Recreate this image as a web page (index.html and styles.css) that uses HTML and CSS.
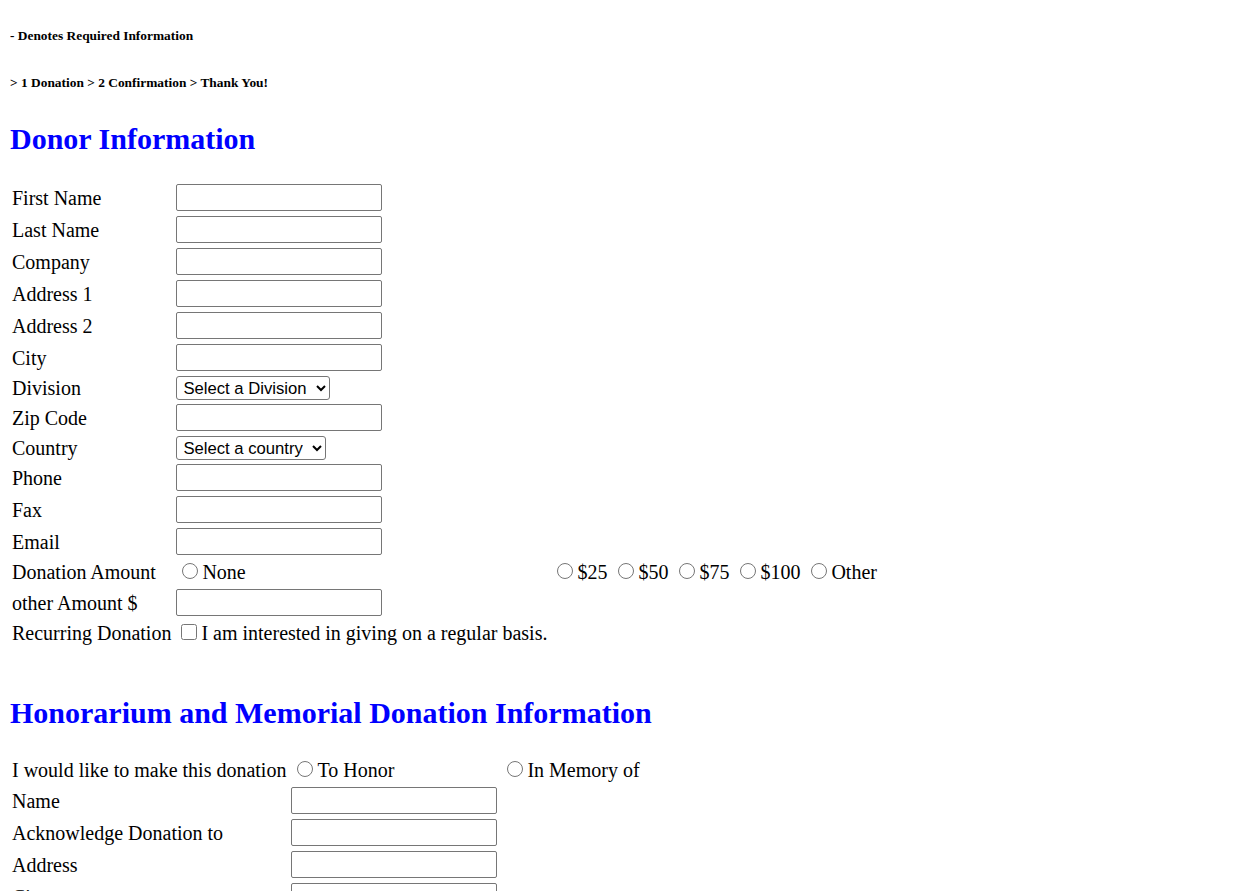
FILE: index.html
```html
<!DOCTYPE html>
<html>
<head>
<meta charset="utf-8">
<title>Donation</title>
<link rel="stylesheet" href="styles.css">
</head>
<body>
<h6 class="note note-first">- Denotes Required Information</h6>
<h6 class="note">&gt; 1 Donation &gt; 2 Confirmation &gt; Thank You!</h6>
<form class="donation">
  <h2 class="section">Donor Information</h2>
  <table class="fields">
    <tr><td class="label">First Name</td><td><input type="text" class="field"></td></tr>
    <tr><td class="label">Last Name</td><td><input type="text" class="field"></td></tr>
    <tr><td class="label">Company</td><td><input type="text" class="field"></td></tr>
    <tr><td class="label">Address 1</td><td><input type="text" class="field"></td></tr>
    <tr><td class="label">Address 2</td><td><input type="text" class="field"></td></tr>
    <tr><td class="label">City</td><td><input type="text" class="field"></td></tr>
    <tr><td class="label">Division</td><td><select class="picker"><option>Select a Division</option></select></td></tr>
    <tr><td class="label">Zip Code</td><td><input type="text" class="field"></td></tr>
    <tr><td class="label">Country</td><td><select class="picker"><option>Select a country</option></select></td></tr>
    <tr><td class="label">Phone</td><td><input type="text" class="field"></td></tr>
    <tr><td class="label">Fax</td><td><input type="text" class="field"></td></tr>
    <tr><td class="label">Email</td><td><input type="text" class="field"></td></tr>
    <tr class="choice">
      <td class="label">Donation Amount</td>
      <td><input type="radio" name="amount" class="pick">None</td>
      <td><input type="radio" name="amount" class="pick">$25 <input type="radio" name="amount" class="pick">$50 <input type="radio" name="amount" class="pick">$75 <input type="radio" name="amount" class="pick">$100 <input type="radio" name="amount" class="pick">Other</td>
    </tr>
    <tr><td class="label">other Amount $</td><td><input type="text" class="field"></td></tr>
    <tr class="choice"><td class="label">Recurring Donation</td><td><input type="checkbox" class="tick">I am interested in giving on a regular basis.</td></tr>
  </table>

  <h2 class="section section-spaced">Honorarium and Memorial Donation Information</h2>
  <table class="fields">
    <tr class="choice">
      <td class="label">I would like to make this donation</td>
      <td><input type="radio" name="kind" class="pick">To Honor</td>
      <td><input type="radio" name="kind" class="pick">In Memory of</td>
    </tr>
    <tr><td class="label">Name</td><td><input type="text" class="field"></td></tr>
    <tr><td class="label">Acknowledge Donation to</td><td><input type="text" class="field"></td></tr>
    <tr><td class="label">Address</td><td><input type="text" class="field"></td></tr>
    <tr><td class="label">City</td><td><input type="text" class="field"></td></tr>
    <tr><td class="label">Division</td><td><select class="picker"><option>Select a Division</option></select></td></tr>
    <tr><td class="label">Zip Code</td><td><input type="text" class="field"></td></tr>
  </table>
</form>
</body>
</html>
```

FILE: styles.css
```css
html, body {
  background: #ffffff;
}

body {
  margin: 0 10px 10px;
  font-family: "Liberation Serif", "Times New Roman", serif;
  font-size: 20px;
  color: #000000;
}

.note {
  font-size: 13.4px;
  font-weight: bold;
  margin: 31px 0;
}

.note-first {
  margin-top: 28px;
}

.donation {
  margin: 0;
}

.section {
  font-size: 30px;
  font-weight: bold;
  color: #0000ff;
  margin: 31px 0 25px;
}

.section-spaced {
  margin-top: 47px;
}

.fields {
  border-collapse: separate;
  border-spacing: 2px;
  font-size: 20px;
}

.fields td {
  padding: 1px;
  vertical-align: middle;
}

.fields td.label {
  padding: 1px 2px 1px 0;
  white-space: nowrap;
}

.field {
  display: block;
  box-sizing: border-box;
  width: 206px;
  height: 27px;
  margin: 0 0 1px;
  padding: 1px 3px;
  border: 1px solid #767676;
  border-radius: 2px;
  font-family: "Liberation Sans", Arial, sans-serif;
  font-size: 16.67px;
  background: #ffffff;
}

.picker {
  display: block;
  box-sizing: border-box;
  height: 24px;
  margin: 0;
  padding: 0 6px 0 2px;
  border: 1px solid #767676;
  border-radius: 3px;
  font-family: "Liberation Sans", Arial, sans-serif;
  font-size: 16.67px;
  color: #000000;
  background: #ffffff;
}

.choice td {
  line-height: 25px;
}

.pick {
  width: 16px;
  height: 16px;
  margin: 3px 4px 0 6px;
}

.tick {
  width: 16px;
  height: 16px;
  margin: 3px 4px 3px 5px;
}
```
